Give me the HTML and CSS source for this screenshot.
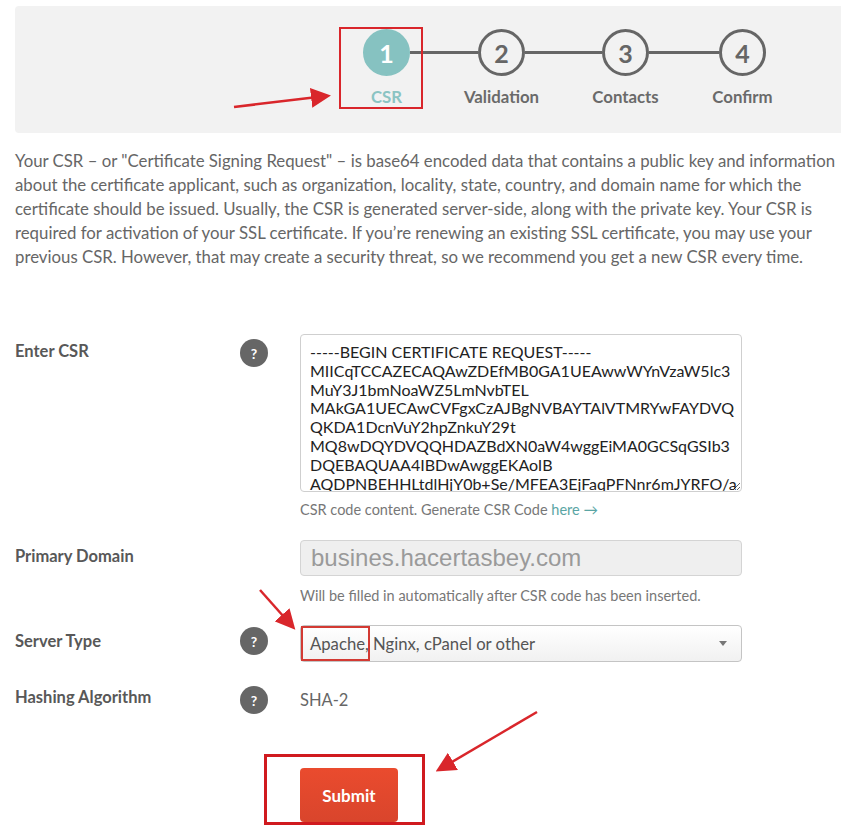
FILE: index.html
```html
<!DOCTYPE html>
<html lang="en">

<head>
    <meta charset="UTF-8">
    <meta name="viewport" content="width=device-width, initial-scale=1.0">
    <title>Enter CSR</title>
    <link rel="stylesheet" href="styles.css">
</head>

<body>
    <div class="page">
        <div class="stepper">
            <div class="step active">
                <div class="circle">1</div>
                <div class="step-label">CSR</div>
            </div>
            <div class="line line-1"></div>
            <div class="step">
                <div class="circle">2</div>
                <div class="step-label">Validation</div>
            </div>
            <div class="line line-2"></div>
            <div class="step">
                <div class="circle">3</div>
                <div class="step-label">Contacts</div>
            </div>
            <div class="line line-3"></div>
            <div class="step">
                <div class="circle">4</div>
                <div class="step-label">Confirm</div>
            </div>
        </div>

        <p class="intro">Your CSR – or "Certificate Signing Request" – is base64 encoded data that contains a public key and information about the certificate applicant, such as organization, locality, state, country, and domain name for which the certificate should be issued. Usually, the CSR is generated server-side, along with the private key. Your CSR is required for activation of your SSL certificate. If you’re renewing an existing SSL certificate, you may use your previous CSR. However, that may create a security threat, so we recommend you get a new CSR every time.</p>

        <div class="form">
            <div class="form-row row-csr">
                <label class="form-label" for="csr">Enter CSR</label>
                <span class="help-icon">?</span>
                <div class="field">
                    <textarea id="csr" class="csr-box" wrap="off">-----BEGIN CERTIFICATE REQUEST-----
MIICqTCCAZECAQAwZDEfMB0GA1UEAwwWYnVzaW5lc3
MuY3J1bmNoaWZ5LmNvbTEL
MAkGA1UECAwCVFgxCzAJBgNVBAYTAlVTMRYwFAYDVQ
QKDA1DcnVuY2hpZnkuY29t
MQ8wDQYDVQQHDAZBdXN0aW4wggEiMA0GCSqGSIb3
DQEBAQUAA4IBDwAwggEKAoIB
AQDPNBEHHLtdlHjY0b+Se/MFEA3EjFaqPFNnr6mJYRFO/a
-----END CERTIFICATE REQUEST-----</textarea>
                    <div class="hint">CSR code content. Generate CSR Code <a href="#">here →</a></div>
                </div>
            </div>

            <div class="form-row row-domain">
                <label class="form-label" for="domain">Primary Domain</label>
                <span></span>
                <div class="field">
                    <input id="domain" class="domain-input" type="text" value="busines.hacertasbey.com" disabled>
                    <div class="hint">Will be filled in automatically after CSR code has been inserted.</div>
                </div>
            </div>

            <div class="form-row row-server">
                <label class="form-label">Server Type</label>
                <span class="help-icon">?</span>
                <div class="field">
                    <div class="select">
                        <span>Apache, Nginx, cPanel or other</span>
                        <span class="caret"></span>
                    </div>
                </div>
            </div>

            <div class="form-row row-hash">
                <label class="form-label">Hashing Algorithm</label>
                <span class="help-icon">?</span>
                <div class="field">
                    <div class="hash-value">SHA-2</div>
                </div>
            </div>

            <div class="form-row row-submit">
                <span></span>
                <span></span>
                <div class="field">
                    <button class="submit-btn">Submit</button>
                </div>
            </div>
        </div>

        <!-- red annotation marks drawn over the screenshot -->
        <svg class="marks" width="841" height="829" viewBox="0 0 841 829">
            <defs>
                <marker id="head" markerWidth="8" markerHeight="8" refX="6" refY="4" orient="auto" markerUnits="strokeWidth">
                    <path d="M0,0 L8,4 L0,8 Z" fill="#d9262b"/>
                </marker>
            </defs>
            <rect x="340" y="28" width="82" height="80" fill="none" stroke="#d9262b" stroke-width="2"/>
            <line x1="234" y1="107" x2="326" y2="96" stroke="#d9262b" stroke-width="2.5" marker-end="url(#head)"/>
            <rect x="302" y="627" width="67" height="33" fill="none" stroke="#d33a33" stroke-width="2"/>
            <line x1="260" y1="590" x2="292" y2="626" stroke="#d9262b" stroke-width="2.5" marker-end="url(#head)"/>
            <rect x="265.5" y="755.5" width="158" height="68" fill="none" stroke="#d01a1f" stroke-width="3"/>
            <line x1="537" y1="712" x2="440" y2="769" stroke="#d9262b" stroke-width="2.5" marker-end="url(#head)"/>
        </svg>
    </div>
</body>

</html>
```

FILE: styles.css
```css
body {
    margin: 0;
    background-color: white;
    font-family: Lato, 'Open Sans', sans-serif;
    color: #666;
}

.page {
    position: relative;
    width: 841px;
    height: 829px;
    overflow: hidden;
}

.stepper {
    display: flex;
    align-items: flex-start;
    margin: 6px 0 0 15px;
    padding: 23px 0 0 348px;
    height: 104px;
    background-color: #f2f2f2;
    border-radius: 4px 0 0 4px;
}

.step {
    display: flex;
    flex-direction: column;
    align-items: center;
    width: 47px;
}

.circle {
    box-sizing: border-box;
    width: 47px;
    height: 47px;
    border: 3px solid #666;
    border-radius: 50%;
    display: flex;
    align-items: center;
    justify-content: center;
    font-size: 25px;
    font-weight: bold;
    color: #666;
}

.step.active .circle {
    background-color: #86c2c1;
    border-color: #86c2c1;
    color: white;
}

.step-label {
    margin-top: 10px;
    font-size: 16.8px;
    font-weight: bold;
    white-space: nowrap;
    color: #6a6a6a;
}

.step.active .step-label {
    color: #8bc4c3;
}

.line {
    height: 3px;
    margin-top: 22px;
    background-color: #666;
}

.line-1 { width: 68px; }
.line-2 { width: 77px; }
.line-3 { width: 70px; }

.intro {
    margin: 16px 0 0 15px;
    width: 826px;
    font-size: 16.8px;
    line-height: 24px;
    color: #666;
}

.form {
    margin-top: 65px;
    padding-left: 15px;
}

.form-row {
    display: grid;
    grid-template-columns: 225px 60px 442px;
    align-items: start;
}

.form-label {
    font-size: 16.5px;
    font-weight: bold;
    color: #585858;
}

.help-icon {
    width: 28px;
    height: 28px;
    border-radius: 50%;
    background-color: #666;
    color: white;
    font-size: 14px;
    font-weight: bold;
    display: flex;
    align-items: center;
    justify-content: center;
}

.hint {
    font-size: 14.5px;
    color: #777;
}

.hint a {
    color: #5aa5a4;
    text-decoration: none;
}

.row-csr .form-label { padding-top: 7px; }
.row-csr .help-icon { margin-top: 5px; }

.csr-box {
    display: block;
    box-sizing: border-box;
    width: 442px;
    height: 158px;
    padding: 8px 9px 0;
    border: 1px solid #cfcfcf;
    border-radius: 4px;
    font-family: Lato, 'Open Sans', sans-serif;
    font-size: 16px;
    line-height: 18.8px;
    color: #222;
    overflow: hidden;
    white-space: pre;
}

.row-csr .hint {
    margin-top: 9px;
}

.row-domain {
    margin-top: 22px;
}

.row-domain .form-label { padding-top: 6px; }

.domain-input {
    display: block;
    box-sizing: border-box;
    width: 442px;
    height: 36px;
    padding: 0 10px;
    border: 1px solid #d4d4d4;
    border-radius: 4px;
    background-color: #efefef;
    font-family: 'Liberation Sans', Arial, sans-serif;
    font-size: 24px;
    color: #9a9a9a;
}

.row-domain .hint {
    margin-top: 11px;
}

.row-server {
    margin-top: 21px;
}

.row-server .form-label { padding-top: 6px; }
.row-server .help-icon { margin-top: 2px; }

.select {
    box-sizing: border-box;
    height: 37px;
    display: flex;
    align-items: center;
    justify-content: space-between;
    padding: 0 14px 0 9px;
    border: 1px solid #c4c4c4;
    border-radius: 4px;
    background: linear-gradient(#ffffff, #f1f1f1);
    font-size: 16.7px;
    color: #555;
}

.caret {
    width: 0;
    height: 0;
    border-left: 4px solid transparent;
    border-right: 4px solid transparent;
    border-top: 5px solid #777;
}

.row-hash {
    margin-top: 24px;
}

.row-hash .form-label { padding-top: 1px; }

.hash-value {
    padding-top: 4px;
    font-size: 16.5px;
    color: #666;
}

.row-submit {
    margin-top: 54px;
}

.submit-btn {
    width: 98px;
    height: 54px;
    border: none;
    border-radius: 4px;
    background: linear-gradient(#ea4b2e, #d9452c);
    color: white;
    font-family: Lato, 'Open Sans', sans-serif;
    font-size: 17px;
    font-weight: bold;
    cursor: pointer;
}

.marks {
    position: absolute;
    top: 0;
    left: 0;
    pointer-events: none;
}
```
